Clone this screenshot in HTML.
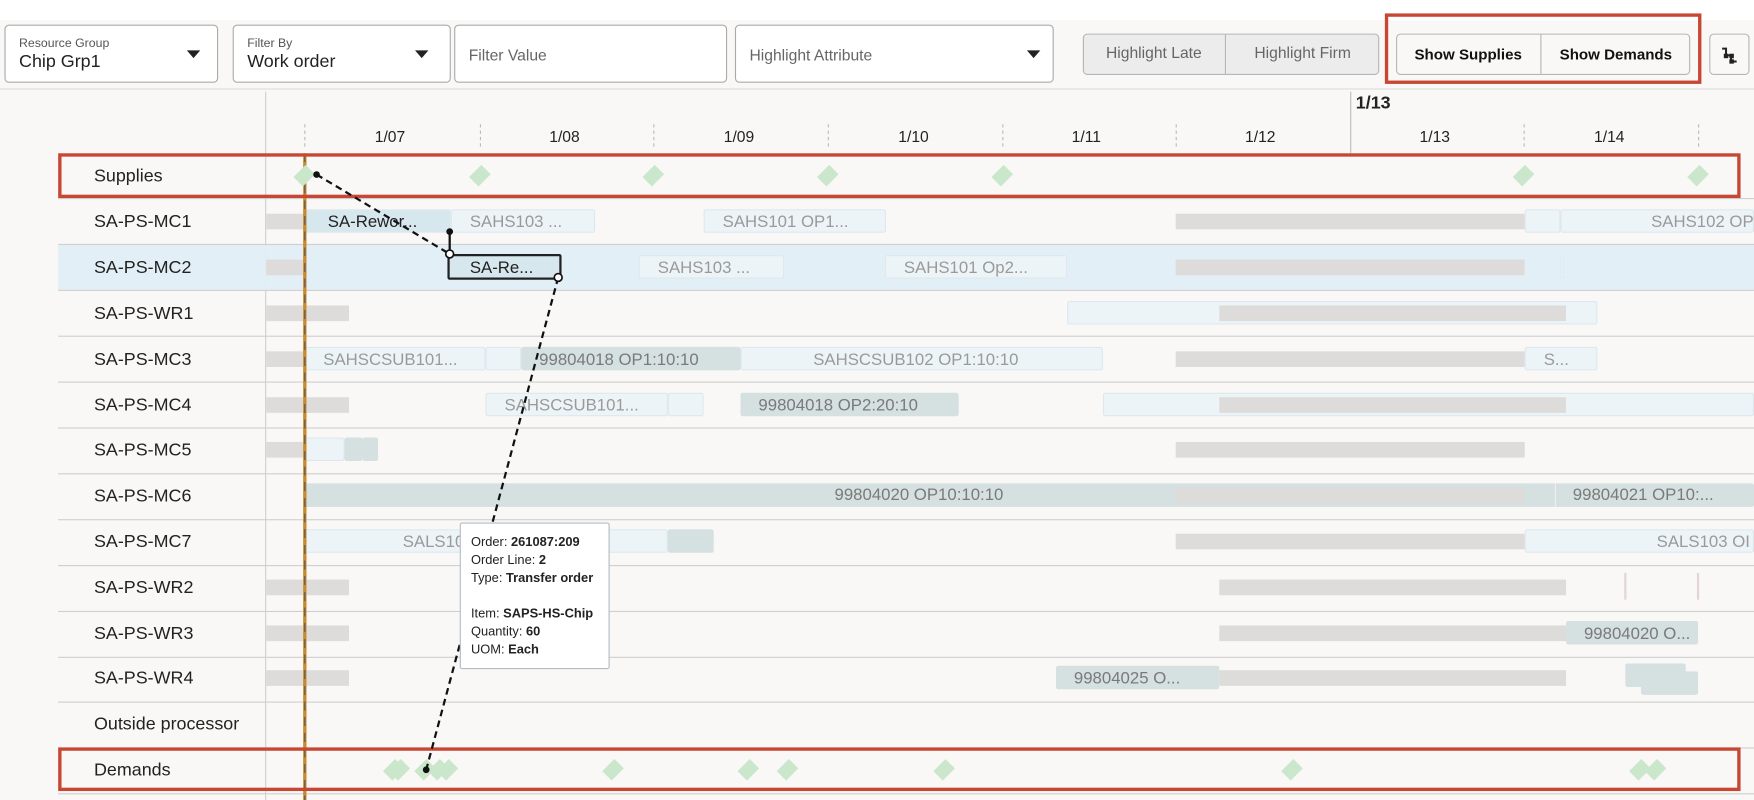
<!DOCTYPE html>
<html><head><meta charset="utf-8"><style>
*{box-sizing:border-box;margin:0;padding:0}
body{width:1754px;height:800px;overflow:hidden;background:#f9f8f6;font-family:"Liberation Sans",sans-serif}
#w{position:absolute;left:0;top:0;width:1568px;height:715px;transform:scale(1.11862,1.11888);transform-origin:0 0;background:#f9f8f6}
.a{position:absolute}
.box{position:absolute;border:1px solid #a9aaab;border-radius:4px;background:#fff}
.lbl{position:absolute;font-size:11px;color:#555}
.val{position:absolute;font-size:16px;color:#222}
.ph{position:absolute;font-size:14px;color:#666}
.tri{position:absolute;width:0;height:0;border-left:6px solid transparent;border-right:6px solid transparent;border-top:7px solid #222}
.rl{position:absolute;left:52px;width:185px;font-size:16px;color:#222;padding-left:32px}
.hl{position:absolute;left:52px;width:1516px;height:1px;background:#cfcfcf}
.g{position:absolute;height:14px;background:#dedcda}
.lb{position:absolute;height:21px;background:#edf4f8;border:1px solid #dde8ee;border-radius:2px;color:#9a9a9a;font-size:15px;line-height:21px;white-space:nowrap;overflow:hidden;padding-left:16px}
.gb{position:absolute;height:21px;background:#d5e0e0;border-radius:2px;color:#7a7a7a;font-size:15px;line-height:23px;white-space:nowrap;overflow:hidden;padding-left:16px}
.d{position:absolute;width:14px;height:14px;background:#cae7cc;transform:rotate(45deg) scale(.85,1.1)}
.dt{position:absolute;top:114px;font-size:14px;color:#222}
.tk{position:absolute;top:111px;height:20px;border-left:1px dashed #bbb}
.rb{position:absolute;border:3px solid #c74634}
.btn{position:absolute;font-size:14px;line-height:35px;text-align:center}
</style></head><body><div id="w">
<div class="a" style="left:0;top:0;width:1568px;height:18px;background:#fff"></div>
<div class="a" style="left:0;top:79px;width:1568px;height:1px;background:#ddd"></div>
<!-- toolbar -->
<div class="box" style="left:4px;top:22px;width:191px;height:52px"></div>
<div class="lbl" style="left:17px;top:33px">Resource Group</div><div class="val" style="left:17px;top:47px">Chip Grp1</div><div class="tri" style="left:167px;top:45px"></div>
<div class="box" style="left:208px;top:22px;width:195px;height:52px"></div>
<div class="lbl" style="left:221px;top:33px">Filter By</div><div class="val" style="left:221px;top:47px">Work order</div><div class="tri" style="left:371px;top:45px"></div>
<div class="box" style="left:406px;top:22px;width:244px;height:52px"></div><div class="ph" style="left:419px;top:41px">Filter Value</div>
<div class="box" style="left:657px;top:22px;width:285px;height:52px"></div><div class="ph" style="left:670px;top:41px">Highlight Attribute</div><div class="tri" style="left:918px;top:45px"></div>
<div class="box" style="left:968px;top:30px;width:265px;height:37px;background:#ececec;border-color:#b5b5b5"></div>
<div class="a" style="left:1095px;top:31px;width:1px;height:35px;background:#b5b5b5"></div>
<div class="btn" style="left:968px;top:30px;width:127px;color:#666">Highlight Late</div>
<div class="btn" style="left:1096px;top:30px;width:137px;color:#666">Highlight Firm</div>
<div class="box" style="left:1248px;top:30px;width:263px;height:37px;background:#f9f8f6;border-color:#b5b5b5"></div>
<div class="a" style="left:1377px;top:31px;width:1px;height:35px;background:#b5b5b5"></div>
<div class="btn" style="left:1248px;top:31px;width:129px;color:#111;font-weight:bold;font-size:13.5px">Show Supplies</div>
<div class="btn" style="left:1378px;top:31px;width:133px;color:#111;font-weight:bold;font-size:13.5px">Show Demands</div>
<div class="box" style="left:1528px;top:30px;width:36px;height:37px;background:#f9f8f6;border-color:#b5b5b5"></div>
<svg class="a" style="left:1538px;top:40px" width="16" height="17"><path d="M1.5 3.5h3.5v6h4.5v5.5h5" stroke="#222" stroke-width="1.8" fill="none"/><rect x="3" y="8" width="4" height="4" fill="#222"/><rect x="8" y="8" width="4" height="4" fill="#222"/><rect x="8" y="13" width="4" height="4" fill="#222"/></svg>
<div class="rb" style="left:1238px;top:12px;width:283px;height:63px"></div>
<!-- timeline header -->
<div class="a" style="left:237px;top:82px;width:1px;height:633px;background:#cfcfcf"></div>
<div class="a" style="left:1212px;top:84px;font-size:16px;font-weight:bold;color:#222">1/13</div>
<div class="a" style="left:1207px;top:82px;width:1px;height:55px;background:#bbb"></div>
<div class="tk" style="left:272px"></div><div class="tk" style="left:429px"></div><div class="tk" style="left:584px"></div><div class="tk" style="left:740px"></div><div class="tk" style="left:896px"></div><div class="tk" style="left:1051px"></div><div class="tk" style="left:1362px"></div><div class="tk" style="left:1518px"></div>
<div class="dt" style="left:335px">1/07</div><div class="dt" style="left:491px">1/08</div><div class="dt" style="left:647px">1/09</div><div class="dt" style="left:803px">1/10</div><div class="dt" style="left:958px">1/11</div><div class="dt" style="left:1113px">1/12</div><div class="dt" style="left:1269px">1/13</div><div class="dt" style="left:1425px">1/14</div>
<!-- rows -->
<div class="a" style="left:237px;top:219px;width:1331px;height:40px;background:#e3eff6"></div>
<div class="a" style="left:52px;top:219px;width:185px;height:40px;background:#e3eff6"></div>
<div class="hl" style="top:177px"></div><div class="hl" style="top:218px"></div><div class="hl" style="top:259px"></div><div class="hl" style="top:300px"></div><div class="hl" style="top:341px"></div><div class="hl" style="top:382px"></div><div class="hl" style="top:423px"></div><div class="hl" style="top:464px"></div><div class="hl" style="top:505px"></div><div class="hl" style="top:546px"></div><div class="hl" style="top:587px"></div><div class="hl" style="top:627px"></div><div class="hl" style="top:668px"></div><div class="hl" style="top:709px"></div>
<div class="rl" style="top:149px">Supplies</div><div class="rl" style="top:190px">SA-PS-MC1</div><div class="rl" style="top:231px">SA-PS-MC2</div><div class="rl" style="top:272px">SA-PS-WR1</div><div class="rl" style="top:313px">SA-PS-MC3</div><div class="rl" style="top:354px">SA-PS-MC4</div><div class="rl" style="top:394px">SA-PS-MC5</div><div class="rl" style="top:435px">SA-PS-MC6</div><div class="rl" style="top:476px">SA-PS-MC7</div><div class="rl" style="top:517px">SA-PS-WR2</div><div class="rl" style="top:558px">SA-PS-WR3</div><div class="rl" style="top:598px">SA-PS-WR4</div><div class="rl" style="top:639px">Outside processor</div><div class="rl" style="top:680px">Demands</div>
<!-- MC1 -->
<div class="g" style="left:238px;top:191px;width:34px"></div>
<div class="lb" style="left:272px;top:187px;width:131px;background:#d7e7ee;color:#222;padding-left:20px">SA-Rewor...</div>
<div class="lb" style="left:403px;top:187px;width:129px">SAHS103 ...</div>
<div class="lb" style="left:629px;top:187px;width:163px">SAHS101 OP1...</div>
<div class="g" style="left:1051px;top:191px;width:312px"></div>
<div class="lb" style="left:1363px;top:187px;width:32px"></div>
<div class="lb" style="left:1395px;top:187px;width:173px;padding-left:80px">SAHS102 OP</div>
<!-- MC2 -->
<div class="g" style="left:238px;top:232px;width:34px"></div>
<div class="lb" style="left:400px;top:227px;width:102px;height:23px;background:#d7e7ee;border:2px solid #222;color:#222;padding-left:18px">SA-Re...</div>
<div class="lb" style="left:571px;top:228px;width:130px">SAHS103 ...</div>
<div class="lb" style="left:791px;top:228px;width:163px">SAHS101 Op2...</div>
<div class="g" style="left:1051px;top:232px;width:312px"></div>
<div class="lb" style="left:1395px;top:228px;width:3px;padding:0"></div>
<!-- WR1 -->
<div class="g" style="left:238px;top:273px;width:74px"></div>
<div class="lb" style="left:954px;top:269px;width:474px"></div>
<div class="g" style="left:1090px;top:273px;width:310px"></div>
<!-- MC3 -->
<div class="g" style="left:238px;top:314px;width:34px"></div>
<div class="lb" style="left:272px;top:310px;width:162px">SAHSCSUB101...</div>
<div class="lb" style="left:434px;top:310px;width:32px"></div>
<div class="gb" style="left:466px;top:310px;width:196px">99804018 OP1:10:10</div>
<div class="lb" style="left:662px;top:310px;width:324px;padding-left:64px">SAHSCSUB102 OP1:10:10</div>
<div class="g" style="left:1051px;top:314px;width:312px"></div>
<div class="lb" style="left:1363px;top:310px;width:65px">S...</div>
<!-- MC4 -->
<div class="g" style="left:238px;top:355px;width:74px"></div>
<div class="lb" style="left:434px;top:351px;width:163px">SAHSCSUB101...</div>
<div class="lb" style="left:597px;top:351px;width:32px"></div>
<div class="gb" style="left:662px;top:351px;width:195px">99804018 OP2:20:10</div>
<div class="lb" style="left:986px;top:351px;width:582px"></div>
<div class="g" style="left:1090px;top:355px;width:310px"></div>
<!-- MC5 -->
<div class="g" style="left:238px;top:395px;width:34px"></div>
<div class="lb" style="left:272px;top:391px;width:36px"></div>
<div class="gb" style="left:308px;top:391px;width:16px;padding:0"></div>
<div class="gb" style="left:324px;top:391px;width:14px;padding:0"></div>
<div class="g" style="left:1051px;top:395px;width:312px"></div>
<!-- MC6 -->
<div class="gb" style="left:272px;top:432px;width:1296px"></div>
<div class="g" style="left:1051px;top:436px;width:312px"></div>
<div class="a" style="left:746px;top:434px;font-size:15px;color:#7a7a7a">99804020 OP10:10:10</div>
<div class="a" style="left:1390px;top:432px;width:1px;height:21px;background:#eee"></div>
<div class="a" style="left:1406px;top:434px;font-size:15px;color:#7a7a7a">99804021 OP10:...</div>
<!-- MC7 -->
<div class="lb" style="left:272px;top:473px;width:325px;padding-left:87px">SALS10</div>
<div class="gb" style="left:597px;top:473px;width:41px"></div>
<div class="g" style="left:1051px;top:477px;width:312px"></div>
<div class="lb" style="left:1363px;top:473px;width:205px;padding-left:117px">SALS103 OI</div>
<!-- WR2 -->
<div class="g" style="left:238px;top:518px;width:74px"></div>
<div class="g" style="left:1090px;top:518px;width:310px"></div>
<div class="a" style="left:1452px;top:512px;width:2px;height:24px;background:#e3d5d7"></div>
<div class="a" style="left:1517px;top:512px;width:2px;height:24px;background:#e3d5d7"></div>
<!-- WR3 -->
<div class="g" style="left:238px;top:559px;width:74px"></div>
<div class="g" style="left:1090px;top:559px;width:310px"></div>
<div class="gb" style="left:1400px;top:555px;width:118px">99804020 O...</div>
<!-- WR4 -->
<div class="g" style="left:238px;top:599px;width:74px"></div>
<div class="gb" style="left:944px;top:595px;width:146px">99804025 O...</div>
<div class="g" style="left:1090px;top:599px;width:310px"></div>
<div class="gb" style="left:1453px;top:593px;width:54px"></div>
<div class="gb" style="left:1467px;top:600px;width:51px"></div>
<!-- now line -->
<div class="a" style="left:271px;top:137px;width:3px;height:578px;background:#c98a2e"></div>
<div class="a" style="left:272px;top:137px;width:1px;height:578px;background:repeating-linear-gradient(#555 0 8px,transparent 8px 14px)"></div>
<!-- diamonds -->
<div class="d" style="left:265px;top:150px"></div><div class="d" style="left:422px;top:150px"></div><div class="d" style="left:577px;top:150px"></div><div class="d" style="left:733px;top:150px"></div><div class="d" style="left:889px;top:150px"></div><div class="d" style="left:1355px;top:150px"></div><div class="d" style="left:1511px;top:150px"></div>
<div class="d" style="left:345px;top:681px"></div><div class="d" style="left:350px;top:681px"></div><div class="d" style="left:373px;top:681px"></div><div class="d" style="left:385px;top:681px"></div><div class="d" style="left:393px;top:681px"></div><div class="d" style="left:541px;top:681px"></div><div class="d" style="left:662px;top:681px"></div><div class="d" style="left:697px;top:681px"></div><div class="d" style="left:837px;top:681px"></div><div class="d" style="left:1148px;top:681px"></div><div class="d" style="left:1459px;top:681px"></div><div class="d" style="left:1473px;top:681px"></div>
<!-- red boxes -->
<div class="rb" style="left:52px;top:137px;width:1504px;height:40px"></div>
<div class="rb" style="left:52px;top:668px;width:1504px;height:39px"></div>
<!-- dependency lines -->
<svg class="a" style="left:0;top:0" width="1568" height="715">
<path d="M283 156L402 227" stroke="#111" stroke-width="2" stroke-dasharray="6 4" fill="none"/>
<path d="M402 207V227" stroke="#111" stroke-width="2"/>
<path d="M499 248L381 688" stroke="#111" stroke-width="2" stroke-dasharray="6 4" fill="none"/>
<circle cx="283" cy="156" r="3" fill="#111"/><circle cx="402" cy="207" r="3" fill="#111"/><circle cx="381" cy="688" r="3" fill="#111"/>
<circle cx="402" cy="227" r="3.5" fill="#fff" stroke="#111" stroke-width="1.5"/><circle cx="499" cy="248" r="3.5" fill="#fff" stroke="#111" stroke-width="1.5"/>
</svg>
<!-- tooltip -->
<div class="a" style="left:411px;top:467px;width:134px;height:131px;background:#fff;border:1px solid #b3bcc6;border-radius:2px;padding:9px 0 0 9px;font-size:11.5px;line-height:16px;color:#222">
Order: <b>261087:209</b><br>Order Line: <b>2</b><br>Type: <b>Transfer order</b><br><br>Item: <b>SAPS-HS-Chip</b><br>Quantity: <b>60</b><br>UOM: <b>Each</b></div>
</div></body></html>
